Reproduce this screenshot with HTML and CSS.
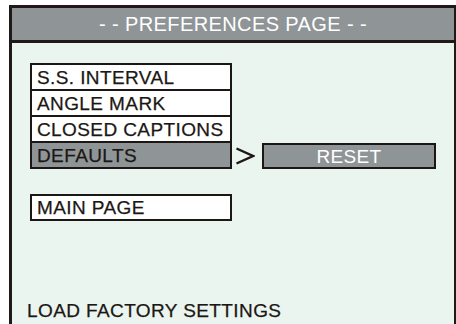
FILE: index.html
```html
<!DOCTYPE html>
<html>
  <head>
    <meta charset="UTF-8"/>
    <title>Preferences Page</title>
    <link rel="stylesheet" href="styles.css">
  </head>
  <body>
    <div class="screen">
        <header class="title">- - PREFERENCES PAGE - -</header>

        <section class="content">
            <div class="menu">
                <div class="row"><div class="item">S.S. INTERVAL</div></div>
                <div class="row"><div class="item">ANGLE MARK</div></div>
                <div class="row"><div class="item">CLOSED CAPTIONS</div></div>
                <div class="row">
                    <div class="item selected">DEFAULTS</div>
                    <svg class="arrow" width="20" height="18" viewBox="0 0 20 18">
                        <polyline points="1.5,1.5 18,9 1.5,16.5" fill="none" stroke="#1c1714" stroke-width="2.4"/>
                    </svg>
                    <div class="reset">RESET</div>
                </div>
            </div>

            <div class="item main-page">MAIN PAGE</div>

            <p class="hint">LOAD FACTORY SETTINGS</p>
        </section>
    </div>
  </body>
</html>
```

FILE: styles.css
```css
html, body { padding: 0; margin: 0; }
body {
    background: #fff;
    font-family: "Liberation Sans", Arial, sans-serif;
    color: #1c1714;
}
.screen {
    margin: 5px 0 0 9px;
    height: 319px;
    box-sizing: border-box;
    border-style: solid;
    border-color: #1f1a17;
    border-width: 3px 2px 0 3px;
    background: #ebf5ef;
    display: flex;
    flex-direction: column;
}
.title {
    height: 32px;
    line-height: 33px;
    background: #8f9597;
    border-bottom: 3px solid #1f1a17;
    color: #fff;
    text-align: center;
    font-size: 20px;
    letter-spacing: 0.4px;
}
.content {
    flex: 1;
    display: flex;
    flex-direction: column;
    padding: 20px 0 2px 18px;
}
.menu { display: flex; flex-direction: column; }
.row {
    display: flex;
    align-items: center;
    margin-top: -2px;
}
.row:first-child { margin-top: 0; }
.item {
    width: 202px;
    height: 28px;
    box-sizing: border-box;
    border: 2px solid #1c1714;
    background: #fff;
    padding-left: 5px;
    font-size: 19px;
    line-height: 25px;
    letter-spacing: 0.4px;
    -webkit-text-stroke: 0.25px #1c1714;
}
.item.selected { background: #8f9597; }
.arrow {
    margin: 2px 0 0 3px;
}
.reset {
    margin: 2px 0 0 7px;
    width: 174px;
    height: 26px;
    box-sizing: border-box;
    border: 2px solid #1c1714;
    background: #8f9597;
    color: #fff;
    text-align: center;
    font-size: 19px;
    line-height: 23px;
    letter-spacing: 0.3px;
}
.main-page {
    margin-top: 25px;
    height: 27px;
    line-height: 24px;
}
.hint {
    margin: auto 0 0 -3px;
    font-size: 19px;
    line-height: 22px;
    letter-spacing: 0.4px;
    -webkit-text-stroke: 0.25px #1c1714;
}
```
